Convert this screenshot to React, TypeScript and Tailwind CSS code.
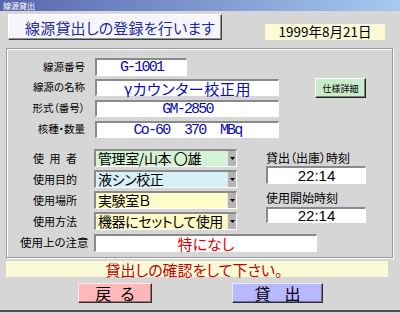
import React from "react";

const sunken =
  "border-t-2 border-l-2 border-b border-r border-t-[#8a8a8a] border-l-[#8a8a8a] border-b-white border-r-white";

function Field({ w, h, children, mono }: { w: string; h: string; children: React.ReactNode; mono?: boolean }) {
  return (
    <div className={`${w} ${h} ${sunken} bg-white flex items-center justify-center text-[#0a0ab4] whitespace-pre leading-none`}>
      {mono ? (
        <span className="font-['Liberation_Mono',monospace] text-[15px] tracking-[-1.8px]">{children}</span>
      ) : (
        <span className="text-[15px] tracking-[0.6px]">{children}</span>
      )}
    </div>
  );
}

function Label({ children }: { children: React.ReactNode }) {
  return <div className="w-[78px] text-right text-[10.5px] leading-none text-black">{children}</div>;
}

function Drop({ bg, text }: { bg: string; text: string }) {
  return (
    <div className={`flex h-[18px] w-[143px] ${sunken}`}>
      <div className={`flex-1 min-w-0 ${bg} flex items-center pl-[2px]`}>
        <span className="text-[14px] tracking-[-0.4px] leading-[15px] whitespace-pre text-black">{text}</span>
      </div>
      <div className="w-[9px] shrink-0 bg-[#b4b4b4] border-l border-l-[#e8e8e8] flex items-center justify-center">
        <svg width="5" height="3" viewBox="0 0 5 3">
          <path d="M0 0H5L2.5 3Z" fill="#000" />
        </svg>
      </div>
    </div>
  );
}

function LowLabel({ children }: { children: React.ReactNode }) {
  return <div className="w-[44px] text-[11px] leading-none text-black flex justify-between">{children}</div>;
}

export default function App() {
  return (
    <div className="w-[400px] h-[314px] bg-[#d6d6d6] flex flex-col overflow-hidden font-['Noto_Sans_CJK_JP',sans-serif] [font-feature-settings:'palt']">
      {/* title bar */}
      <div className="h-[11px] bg-linear-to-r from-[#5866ae] to-[#a6caf0] flex items-center pl-[3px] text-white text-[8px] leading-none">
        線源貸出
      </div>

      {/* header row */}
      <div className="flex items-start mt-[3px] pl-[8px]">
        <div className="w-[214px] h-[26px] bg-[#f6f4fc] border border-t-white border-l-white border-b-[#404040] border-r-[#404040] shadow-[inset_-1px_-1px_0_#909090] flex items-center pl-[16px] text-[15px] leading-none text-[#1c2ca8] tracking-[0.2px]">
          線源貸出しの登録を行います
        </div>
        <div className="ml-[43px] mt-[10px] w-[120px] h-[16px] bg-[#fafad4] flex items-center justify-center text-[13.5px] leading-none text-black">
          1999年8月21日
        </div>
      </div>

      {/* group panel */}
      <div className="ml-[6px] mt-[8px] w-[387px] h-[210px] border border-[#9a9a9a] shadow-[inset_1px_1px_0_#ffffff,1px_1px_0_#ffffff] flex flex-col">
        {/* upper section */}
        <div className="flex items-start pt-[9px]">
          <div className="flex flex-col">
            <div className="flex items-center h-[18px]">
              <Label>線源番号</Label>
              <div className="ml-[10px]">
                <Field w="w-[92px]" h="h-[18px]" mono>
                  G-1001
                </Field>
              </div>
            </div>
            <div className="flex items-center h-[17px] mt-[3px]">
              <Label>線源の名称</Label>
              <div className="ml-[10px]">
                <Field w="w-[184px]" h="h-[17px]">γカウンター校正用</Field>
              </div>
            </div>
            <div className="flex items-center h-[17px] mt-[4px]">
              <Label>形式（番号）</Label>
              <div className="ml-[10px]">
                <Field w="w-[184px]" h="h-[17px]" mono>
                  GM-2850
                </Field>
              </div>
            </div>
            <div className="flex items-center h-[17px] mt-[4px]">
              <Label>核種・数量</Label>
              <div className="ml-[10px]">
                <Field w="w-[184px]" h="h-[17px]" mono>
                  {"Co-60  370  MBq"}
                </Field>
              </div>
            </div>
          </div>
          <div className="ml-[36px] mt-[20px] w-[51px] h-[20px] bg-[#c8ecc8] border border-t-white border-l-white border-b-[#202020] border-r-[#202020] shadow-[inset_-1px_-1px_0_#808080] flex items-center justify-center text-[9px] leading-none text-black">
            仕様詳細
          </div>
        </div>

        {/* lower section */}
        <div className="flex items-start mt-[11px]">
          <div className="flex flex-col gap-[3px] pl-[26px]">
            <div className="flex items-center h-[18px]">
              <LowLabel>
                <span>使</span>
                <span>用</span>
                <span>者</span>
              </LowLabel>
              <div className="ml-[17px]">
                <Drop bg="bg-[#d4f2d4]" text="管理室/山本 〇雄" />
              </div>
            </div>
            <div className="flex items-center h-[18px]">
              <LowLabel>使用目的</LowLabel>
              <div className="ml-[17px]">
                <Drop bg="bg-[#d6f0f8]" text="液シン校正" />
              </div>
            </div>
            <div className="flex items-center h-[18px]">
              <LowLabel>使用場所</LowLabel>
              <div className="ml-[17px]">
                <Drop bg="bg-[#fffcc8]" text="実験室Ｂ" />
              </div>
            </div>
            <div className="flex items-center h-[18px]">
              <LowLabel>使用方法</LowLabel>
              <div className="ml-[17px]">
                <Drop bg="bg-[#fff9c4]" text="機器にセットして使用" />
              </div>
            </div>
          </div>
          <div className="ml-[29px] flex flex-col">
            <div className="h-[17px] flex items-center text-[12px] leading-none text-black">貸出（出庫）時刻</div>
            <div className={`w-[100px] h-[18px] bg-white ${sunken} flex items-center justify-center font-['Liberation_Sans',sans-serif] text-[15px] leading-none text-black`}>
              22:14
            </div>
            <div className="mt-[7px] h-[14px] flex items-center text-[12px] leading-none text-black">使用開始時刻</div>
            <div className={`mt-[2px] w-[100px] h-[16px] bg-white ${sunken} flex items-center justify-center font-['Liberation_Sans',sans-serif] text-[15px] leading-none text-black`}>
              22:14
            </div>
          </div>
        </div>

        {/* notes row */}
        <div className="flex items-center mt-[4px] pl-[13px] h-[18px]">
          <div className="w-[66px] text-[11.5px] leading-none text-black whitespace-nowrap">使用上の注意</div>
          <div className={`ml-[8px] w-[223px] h-[18px] bg-white ${sunken} flex items-center justify-center text-[15px] leading-none text-[#e00000]`}>
            特になし
          </div>
        </div>
      </div>

      {/* message bar */}
      <div className="ml-[6px] mt-[3px] w-[382px] h-[16px] bg-[#fafad6] flex items-center justify-center pr-[6px] text-[15px] leading-none text-[#c80000]">
        貸出しの確認をして下さい。
      </div>

      {/* buttons */}
      <div className="flex mt-[6px]">
        <div className="ml-[78px] w-[74px] h-[20px] bg-[#ffb8b8] border border-t-[#ffe8e8] border-l-[#ffe8e8] border-b-[#303030] border-r-[#303030] shadow-[inset_-1px_-1px_0_#a07070] flex items-center justify-center text-[16px] leading-none text-black">
          <span>戻</span>
          <span className="ml-[9px]">る</span>
        </div>
        <div className="ml-[80px] w-[91px] h-[20px] bg-[#b8b8ff] border border-t-[#e8e8ff] border-l-[#e8e8ff] border-b-[#303030] border-r-[#303030] shadow-[inset_-1px_-1px_0_#7070a0] flex items-center justify-center text-[16px] leading-none text-black">
          <span>貸</span>
          <span className="ml-[14px]">出</span>
        </div>
      </div>

      <div className="mt-auto h-[4px] border-t-2 border-t-[#505050]" />
    </div>
  );
}
